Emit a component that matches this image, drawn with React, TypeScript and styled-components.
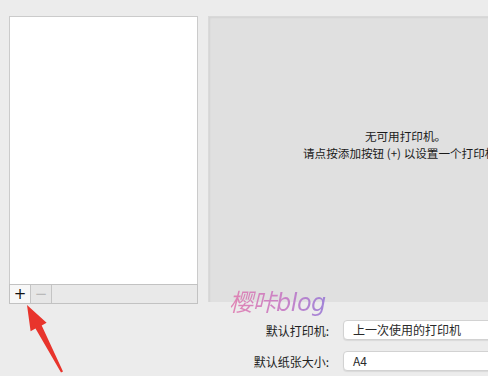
import styled, { createGlobalStyle } from 'styled-components'

const GlobalStyle = createGlobalStyle`
  html, body {
    margin: 0;
    padding: 0;
    background: #ececec;
  }
  body {
    font-family: "Noto Sans CJK SC", "Noto Sans", sans-serif;
  }
`

const Window = styled.div`
  position: relative;
  width: 488px;
  height: 376px;
  overflow: hidden;
  background: #ececec;
  padding-top: 16px;
  box-sizing: border-box;
`

const TopRow = styled.div`
  display: flex;
  gap: 10px;
  padding-left: 9px;
`

const ListColumn = styled.div`
  display: flex;
  flex-direction: column;
  width: 189px;
  flex-shrink: 0;
`

const PrinterList = styled.div`
  height: 267px;
  background: #ffffff;
  border: 1px solid #cbcbcb;
  border-bottom: none;
`

const ListToolbar = styled.div`
  display: flex;
  height: 18px;
  background: #e9e9e9;
  border: 1px solid #c2c2c2;
`

const ToolButton = styled.button<{ $active?: boolean }>`
  width: 21px;
  height: 18px;
  padding: 0;
  margin: 0;
  border: none;
  border-right: 1px solid #c4c4c4;
  background: ${(p) => (p.$active ? '#f7f7f7' : '#e6e6e6')};
  color: ${(p) => (p.$active ? '#111' : '#b9b9b9')};
  font-family: "DejaVu Sans", sans-serif;
  font-size: 15px;
  line-height: 18px;
  display: flex;
  align-items: center;
  justify-content: center;
`

const InfoPanel = styled.div`
  width: 394px;
  height: 286px;
  flex-shrink: 0;
  background: #e0e0e0;
  box-shadow: inset 1px 1px 2px rgba(0, 0, 0, 0.06);
  border-top: 1px solid #d9d9d9;
  border-left: 1px solid #dadada;
  box-sizing: border-box;
  display: flex;
  flex-direction: column;
  align-items: center;
  padding-top: 111px;
`

const InfoLine = styled.div`
  font-size: 11.6px;
  line-height: 17px;
  color: #1a1a1a;
  white-space: nowrap;
`

const Form = styled.div`
  display: flex;
  flex-direction: column;
  gap: 11px;
  margin-top: 16px;
`

const FormRow = styled.div`
  display: flex;
  align-items: center;
  gap: 14px;
`

const Label = styled.div`
  width: 329px;
  text-align: right;
  font-size: 12px;
  color: #222;
  flex-shrink: 0;
`

const Select = styled.div`
  width: 200px;
  height: 20px;
  flex-shrink: 0;
  box-sizing: border-box;
  background: #ffffff;
  border: 1px solid #d2d2d2;
  border-radius: 4px;
  box-shadow: 0 1px 1px rgba(0, 0, 0, 0.08);
  padding-left: 9px;
  font-size: 12px;
  line-height: 18px;
  color: #2a2a2a;
`

const Watermark = styled.div`
  position: absolute;
  left: 229px;
  top: 283px;
  font-family: "DejaVu Sans", "Noto Sans CJK SC", sans-serif;
  font-size: 24px;
  font-style: italic;
  letter-spacing: -0.5px;
  background: linear-gradient(90deg, #e07aae 0%, #c87ac4 55%, #9a7ad6 100%);
  -webkit-background-clip: text;
  background-clip: text;
  color: transparent;
  opacity: 0.9;
`

const Arrow = styled.svg`
  position: absolute;
  left: 0;
  top: 0;
  pointer-events: none;
`

export default function App() {
  return (
    <>
      <GlobalStyle />
      <Window>
        <TopRow>
          <ListColumn>
            <PrinterList />
            <ListToolbar>
              <ToolButton $active>+</ToolButton>
              <ToolButton>−</ToolButton>
            </ListToolbar>
          </ListColumn>
          <InfoPanel>
            <InfoLine>无可用打印机。</InfoLine>
            <InfoLine>请点按添加按钮 (+) 以设置一个打印机。</InfoLine>
          </InfoPanel>
        </TopRow>
        <Form>
          <FormRow>
            <Label>默认打印机:</Label>
            <Select>上一次使用的打印机</Select>
          </FormRow>
          <FormRow>
            <Label>默认纸张大小:</Label>
            <Select>A4</Select>
          </FormRow>
        </Form>
        <Watermark>樱咔blog</Watermark>
        <Arrow width="488" height="376" viewBox="0 0 488 376">
          <polygon
            points="27,305 46.6,322.8 41.7,325.4 63,371.5 61,372.5 35.5,328.6 30.6,331.2"
            fill="#e8342c"
          />
        </Arrow>
      </Window>
    </>
  )
}
